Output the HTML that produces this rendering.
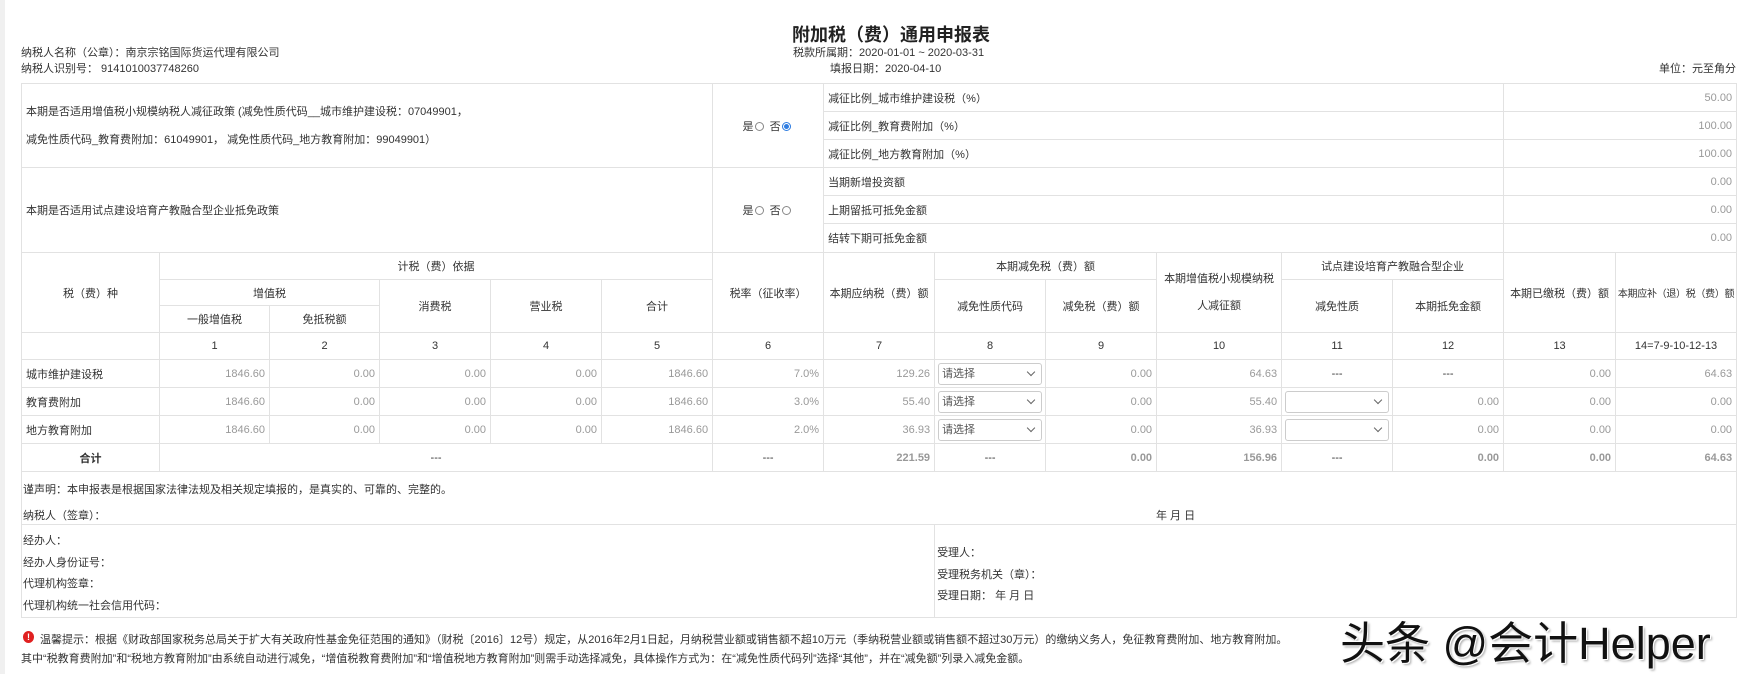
<!DOCTYPE html>
<html><head><meta charset="utf-8"><style>
*{margin:0;padding:0;box-sizing:border-box}
body{width:1739px;height:674px;background:#fff;font-family:"Liberation Sans","Noto Sans CJK SC",sans-serif;font-size:11px;color:#333;position:relative;overflow:hidden}
.strip{position:absolute;left:0;top:0;width:5px;height:674px;background:#f0f0f0}
.abs{position:absolute;white-space:nowrap}
table{position:absolute;left:21px;top:83px;width:1715px;border-collapse:collapse;table-layout:fixed}
td{border:1px solid #e2e2e2;padding:0 4px;vertical-align:middle;white-space:nowrap;overflow:hidden}
.c{text-align:center}.r{text-align:right;color:#999}.b{font-weight:bold}
.sel{height:22px;border:1px solid #ccc;border-radius:3px;position:relative;margin:0 1px;color:#555;line-height:20px;padding-left:3px;font-size:11px}
.sel:after{content:"";position:absolute;right:7px;top:5px;width:5px;height:5px;border-right:1.5px solid #666;border-bottom:1.5px solid #666;transform:rotate(45deg)}
.rd{display:inline-block;width:9px;height:9px;border:1px solid #888;border-radius:50%;vertical-align:-1px;margin:0 3px 0 1px}
.rd.on{border-color:#2f7de1;background:radial-gradient(#2f7de1 45%,#fff 55%)}
</style></head><body>
<div class="strip"></div>
<div class="abs b" style="left:792px;top:21px;font-size:18px;color:#222">附加税（费）通用申报表</div>
<div class="abs" style="left:793px;top:44px">税款所属期：2020-01-01 ~ 2020-03-31</div>
<div class="abs" style="left:830px;top:60px">填报日期：2020-04-10</div>
<div class="abs" style="left:21px;top:44px">纳税人名称（公章）：南京宗铭国际货运代理有限公司</div>
<div class="abs" style="left:21px;top:60px">纳税人识别号： 9141010037748260</div>
<div class="abs" style="right:3px;top:60px">单位：元至角分</div>
<table>
<colgroup><col style="width:138px"><col style="width:110px"><col style="width:110px"><col style="width:111px"><col style="width:111px"><col style="width:111px"><col style="width:111px"><col style="width:111px"><col style="width:111px"><col style="width:111px"><col style="width:125px"><col style="width:111px"><col style="width:111px"><col style="width:112px"><col style="width:121px"></colgroup>
<tr style="height:28px"><td colspan="6" rowspan="3" style="line-height:28px">本期是否适用增值税小规模纳税人减征政策 (减免性质代码__城市维护建设税：07049901，<br>减免性质代码_教育费附加：61049901， 减免性质代码_地方教育附加：99049901）</td><td rowspan="3" class="c">是<span class="rd"></span> 否<span class="rd on"></span></td><td colspan="6">减征比例_城市维护建设税（%）</td><td colspan="2" class="r">50.00</td></tr>
<tr style="height:28px"><td colspan="6">减征比例_教育费附加（%）</td><td colspan="2" class="r">100.00</td></tr>
<tr style="height:28px"><td colspan="6">减征比例_地方教育附加（%）</td><td colspan="2" class="r">100.00</td></tr>
<tr style="height:28px"><td colspan="6" rowspan="3">本期是否适用试点建设培育产教融合型企业抵免政策</td><td rowspan="3" class="c">是<span class="rd"></span> 否<span class="rd"></span></td><td colspan="6">当期新增投资额</td><td colspan="2" class="r">0.00</td></tr>
<tr style="height:28px"><td colspan="6">上期留抵可抵免金额</td><td colspan="2" class="r">0.00</td></tr>
<tr style="height:29px"><td colspan="6">结转下期可抵免金额</td><td colspan="2" class="r">0.00</td></tr>
<tr style="height:27px" class="c"><td rowspan="3" class="c">税（费）种</td><td colspan="5" class="c">计税（费）依据</td><td rowspan="3" class="c">税率（征收率）</td><td rowspan="3" class="c">本期应纳税（费）额</td><td colspan="2" class="c">本期减免税（费）额</td><td rowspan="3" class="c" style="white-space:normal;line-height:27px;padding:0 2px">本期增值税小规模纳税人减征额</td><td colspan="2" class="c">试点建设培育产教融合型企业</td><td rowspan="3" class="c">本期已缴税（费）额</td><td rowspan="3" class="c" style="padding:0;font-size:10px;letter-spacing:-0.3px">本期应补（退）税（费）额</td></tr>
<tr style="height:26px"><td colspan="2" class="c">增值税</td><td rowspan="2" class="c">消费税</td><td rowspan="2" class="c">营业税</td><td rowspan="2" class="c">合计</td><td rowspan="2" class="c">减免性质代码</td><td rowspan="2" class="c">减免税（费）额</td><td rowspan="2" class="c">减免性质</td><td rowspan="2" class="c">本期抵免金额</td></tr>
<tr style="height:27px"><td class="c">一般增值税</td><td class="c">免抵税额</td></tr>
<tr style="height:27px" class="c"><td></td><td class="c">1</td><td class="c">2</td><td class="c">3</td><td class="c">4</td><td class="c">5</td><td class="c">6</td><td class="c">7</td><td class="c">8</td><td class="c">9</td><td class="c">10</td><td class="c">11</td><td class="c">12</td><td class="c">13</td><td class="c">14=7-9-10-12-13</td></tr>
<tr style="height:28px"><td>城市维护建设税</td><td class="r">1846.60</td><td class="r">0.00</td><td class="r">0.00</td><td class="r">0.00</td><td class="r">1846.60</td><td class="r">7.0%</td><td class="r">129.26</td><td style="padding:0 2px"><div class="sel">请选择</div></td><td class="r">0.00</td><td class="r">64.63</td><td class="c">---</td><td class="c">---</td><td class="r">0.00</td><td class="r">64.63</td></tr>
<tr style="height:28px"><td>教育费附加</td><td class="r">1846.60</td><td class="r">0.00</td><td class="r">0.00</td><td class="r">0.00</td><td class="r">1846.60</td><td class="r">3.0%</td><td class="r">55.40</td><td style="padding:0 2px"><div class="sel">请选择</div></td><td class="r">0.00</td><td class="r">55.40</td><td style="padding:0 2px"><div class="sel">&nbsp;</div></td><td class="r">0.00</td><td class="r">0.00</td><td class="r">0.00</td></tr>
<tr style="height:28px"><td>地方教育附加</td><td class="r">1846.60</td><td class="r">0.00</td><td class="r">0.00</td><td class="r">0.00</td><td class="r">1846.60</td><td class="r">2.0%</td><td class="r">36.93</td><td style="padding:0 2px"><div class="sel">请选择</div></td><td class="r">0.00</td><td class="r">36.93</td><td style="padding:0 2px"><div class="sel">&nbsp;</div></td><td class="r">0.00</td><td class="r">0.00</td><td class="r">0.00</td></tr>
<tr style="height:28px"><td class="c b">合计</td><td colspan="5" class="c">---</td><td class="c">---</td><td class="r b">221.59</td><td class="c">---</td><td class="r b">0.00</td><td class="r b">156.96</td><td class="c">---</td><td class="r b">0.00</td><td class="r b">0.00</td><td class="r b">64.63</td></tr>
<tr style="height:53px"><td colspan="15" style="position:relative;vertical-align:top;padding:0"><div class="abs" style="left:1px;top:9px">谨声明：本申报表是根据国家法律法规及相关规定填报的，是真实的、可靠的、完整的。</div><div class="abs" style="left:1px;top:35px">纳税人（签章）：</div><div class="abs" style="left:1134px;top:35px">年 月 日</div></td></tr>
<tr style="height:93px"><td colspan="8" style="vertical-align:top;padding:0;position:relative"><div class="abs" style="left:1px;top:7px">经办人：</div><div class="abs" style="left:1px;top:29px">经办人身份证号：</div><div class="abs" style="left:1px;top:50px">代理机构签章：</div><div class="abs" style="left:1px;top:72px">代理机构统一社会信用代码：</div></td><td colspan="7" style="vertical-align:top;padding:0;position:relative"><div class="abs" style="left:2px;top:19px">受理人：</div><div class="abs" style="left:2px;top:41px">受理税务机关（章）：</div><div class="abs" style="left:2px;top:62px">受理日期： 年 月 日</div></td></tr>
</table>
<div class="abs" style="left:23px;top:631px;width:11px;height:12px;border-radius:50%;background:#e02020;color:#fff;font-size:9px;text-align:center;line-height:12px;font-weight:bold">!</div>
<div class="abs" style="left:40px;top:631px">温馨提示：根据《财政部国家税务总局关于扩大有关政府性基金免征范围的通知》（财税〔2016〕12号）规定，从2016年2月1日起，月纳税营业额或销售额不超10万元（季纳税营业额或销售额不超过30万元）的缴纳义务人，免征教育费附加、地方教育附加。</div>
<div class="abs" style="left:21px;top:650px">其中“税教育费附加”和“税地方教育附加”由系统自动进行减免，“增值税教育费附加”和“增值税地方教育附加”则需手动选择减免，具体操作方式为：在“减免性质代码列”选择“其他”，并在“减免额”列录入减免金额。</div>
<div class="abs" style="left:1340px;top:607px;font-size:45px;color:#111;text-shadow:1px 1px 0 #fff,-1px -1px 0 #fff,2px 2px 2px #aaa">头条 @会计Helper</div>
</body></html>
